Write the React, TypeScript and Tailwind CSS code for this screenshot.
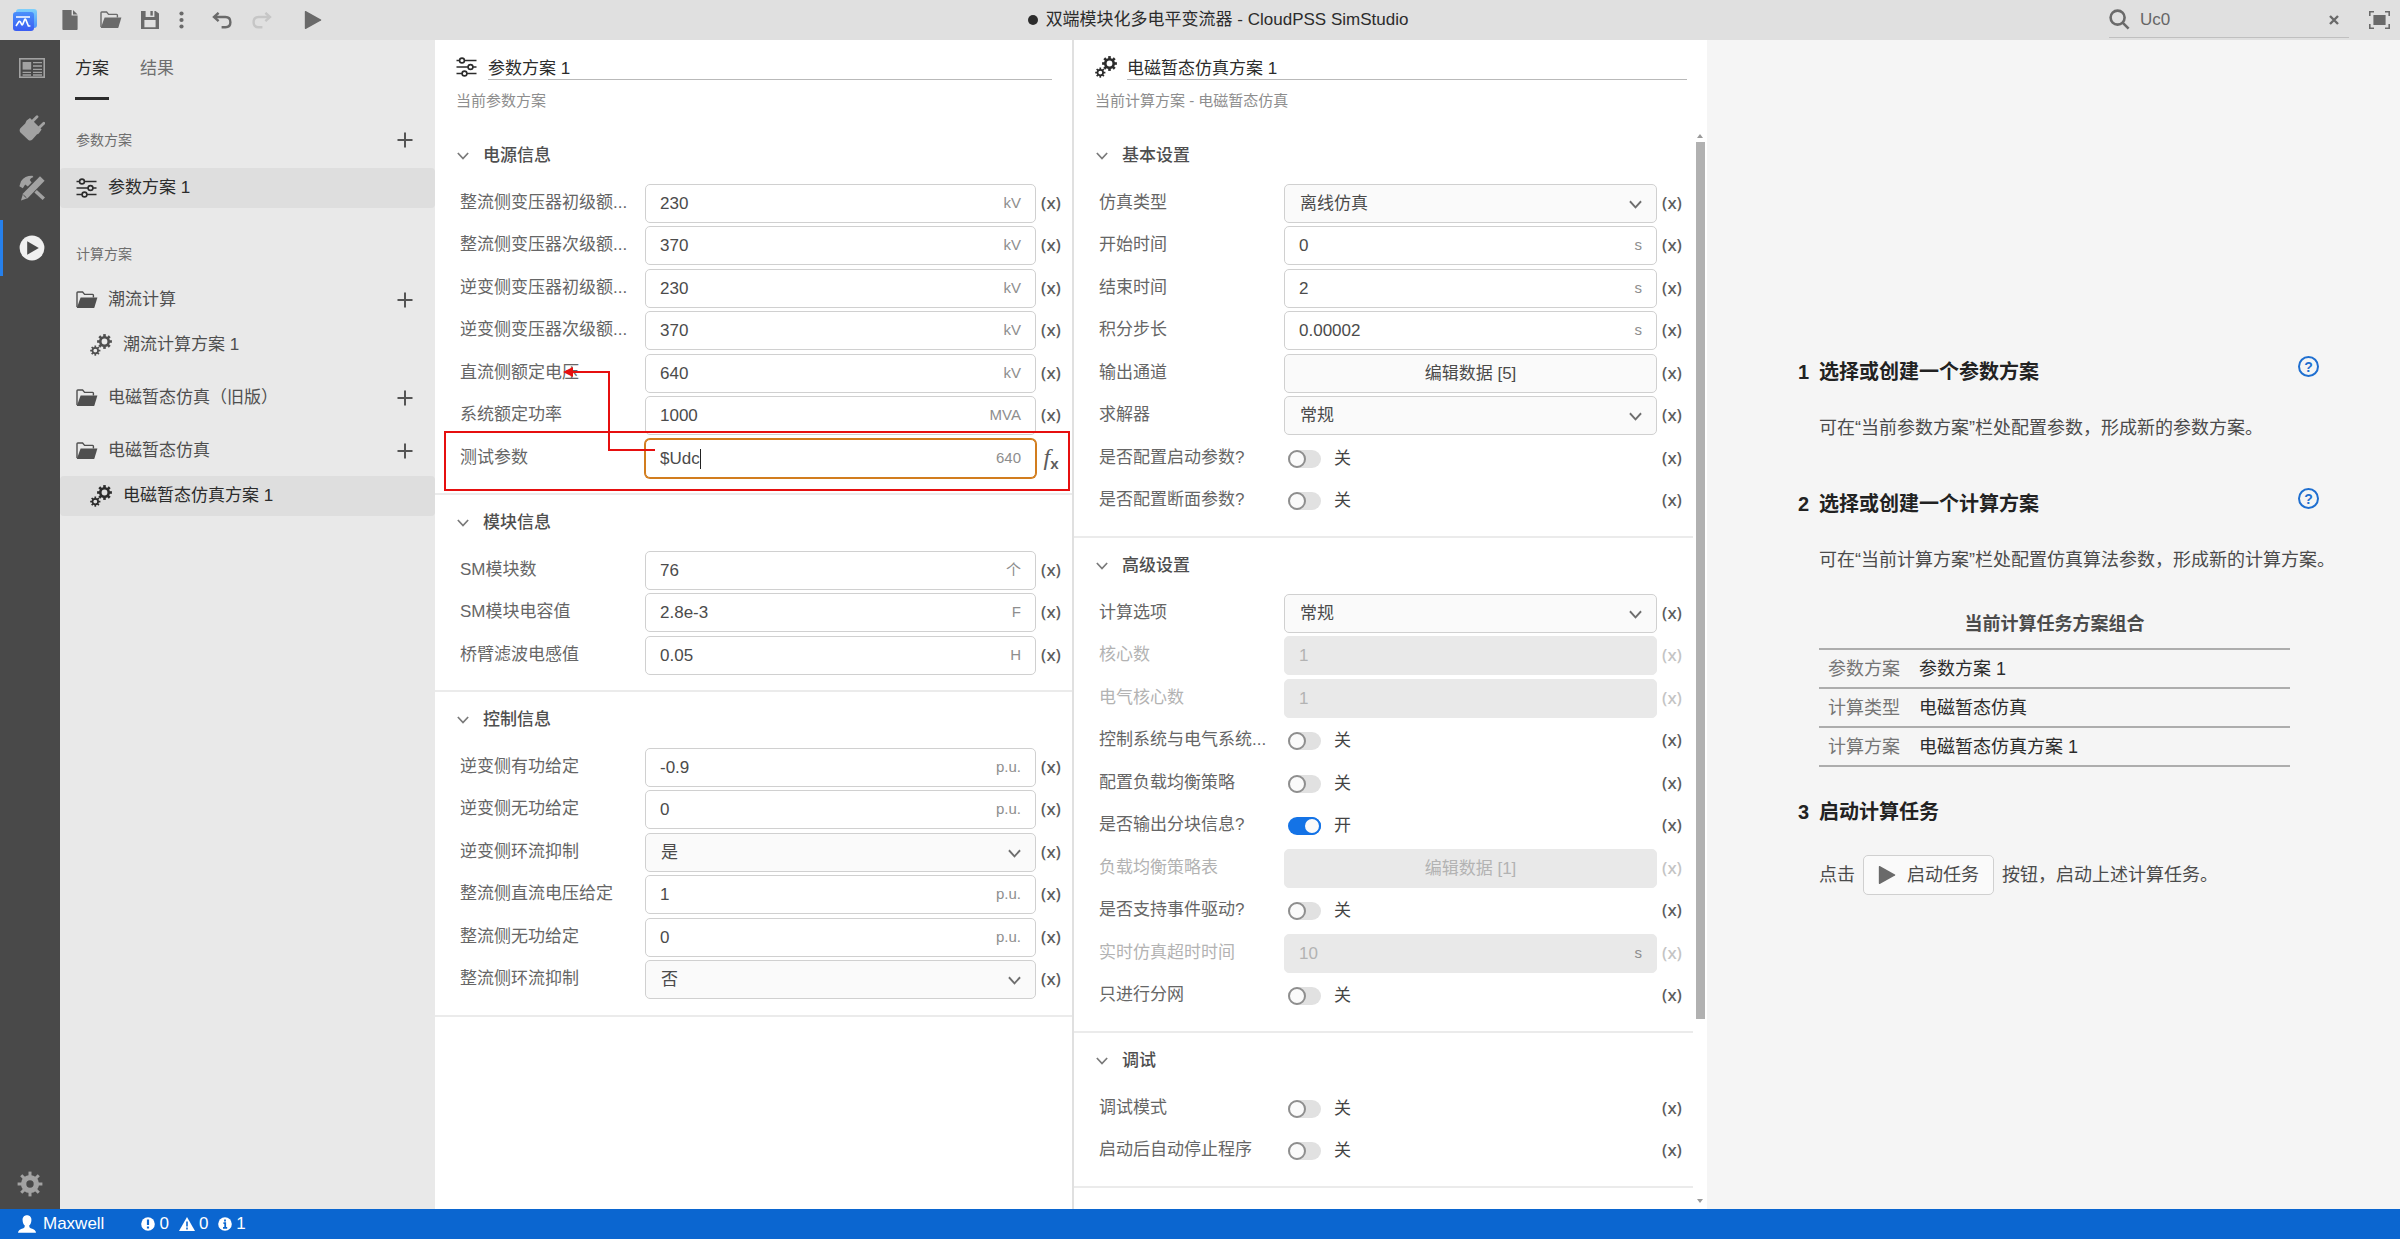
import React from 'react';

type Field = {
  label: string;
  kind?: 'text' | 'select' | 'switch' | 'button';
  value: string;
  unit?: string;
  disabled?: boolean;
  on?: boolean;
  expression?: boolean;
};

const powerFields: Field[] = [
  { label: '整流侧变压器初级额...', value: '230', unit: 'kV' },
  { label: '整流侧变压器次级额...', value: '370', unit: 'kV' },
  { label: '逆变侧变压器初级额...', value: '230', unit: 'kV' },
  { label: '逆变侧变压器次级额...', value: '370', unit: 'kV' },
  { label: '直流侧额定电压', value: '640', unit: 'kV' },
  { label: '系统额定功率', value: '1000', unit: 'MVA' },
  { label: '测试参数', value: '$Udc', unit: '640', expression: true },
];

const moduleFields: Field[] = [
  { label: 'SM模块数', value: '76', unit: '个' },
  { label: 'SM模块电容值', value: '2.8e-3', unit: 'F' },
  { label: '桥臂滤波电感值', value: '0.05', unit: 'H' },
];

const controlFields: Field[] = [
  { label: '逆变侧有功给定', value: '-0.9', unit: 'p.u.' },
  { label: '逆变侧无功给定', value: '0', unit: 'p.u.' },
  { label: '逆变侧环流抑制', kind: 'select', value: '是' },
  { label: '整流侧直流电压给定', value: '1', unit: 'p.u.' },
  { label: '整流侧无功给定', value: '0', unit: 'p.u.' },
  { label: '整流侧环流抑制', kind: 'select', value: '否' },
];

const basicFields: Field[] = [
  { label: '仿真类型', kind: 'select', value: '离线仿真' },
  { label: '开始时间', value: '0', unit: 's' },
  { label: '结束时间', value: '2', unit: 's' },
  { label: '积分步长', value: '0.00002', unit: 's' },
  { label: '输出通道', kind: 'button', value: '编辑数据 [5]' },
  { label: '求解器', kind: 'select', value: '常规' },
  { label: '是否配置启动参数?', kind: 'switch', value: '关' },
  { label: '是否配置断面参数?', kind: 'switch', value: '关' },
];

const advancedFields: Field[] = [
  { label: '计算选项', kind: 'select', value: '常规' },
  { label: '核心数', value: '1', disabled: true },
  { label: '电气核心数', value: '1', disabled: true },
  { label: '控制系统与电气系统...', kind: 'switch', value: '关' },
  { label: '配置负载均衡策略', kind: 'switch', value: '关' },
  { label: '是否输出分块信息?', kind: 'switch', value: '开', on: true },
  { label: '负载均衡策略表', kind: 'button', value: '编辑数据 [1]', disabled: true },
  { label: '是否支持事件驱动?', kind: 'switch', value: '关' },
  { label: '实时仿真超时时间', value: '10', unit: 's', disabled: true },
  { label: '只进行分网', kind: 'switch', value: '关' },
];

const debugFields: Field[] = [
  { label: '调试模式', kind: 'switch', value: '关' },
  { label: '启动后自动停止程序', kind: 'switch', value: '关' },
];

/* ---------- icons ---------- */

function Teeth({ cx, cy, r, len, w, n }: { cx: number; cy: number; r: number; len: number; w: number; n: number }) {
  return (
    <>
      {Array.from({ length: n }, (_, i) => (
        <rect
          key={i}
          x={cx - w / 2}
          y={cy - r - len}
          width={w}
          height={len + 1}
          fill="currentColor"
          transform={`rotate(${(360 / n) * i} ${cx} ${cy})`}
        />
      ))}
    </>
  );
}

function GearsIcon() {
  return (
    <svg viewBox="0 0 22 22" className="size-[22px] shrink-0" fill="none" stroke="none" aria-hidden="true">
      <circle cx="14.5" cy="7.5" r="4.2" stroke="currentColor" strokeWidth="2.6" />
      <Teeth cx={14.5} cy={7.5} r={5} len={2.4} w={2.6} n={8} />
      <circle cx="5.3" cy="16.6" r="2.8" stroke="currentColor" strokeWidth="1.7" />
      <Teeth cx={5.3} cy={16.6} r={3.3} len={1.8} w={1.7} n={8} />
    </svg>
  );
}

function SettingsIcon() {
  return (
    <svg viewBox="0 0 26 26" className="size-[26px]" fill="none" aria-hidden="true">
      <circle cx="13" cy="13" r="6.4" stroke="currentColor" strokeWidth="5.4" />
      <Teeth cx={13} cy={13} r={8.6} len={3.8} w={3} n={8} />
    </svg>
  );
}

function SlidersIcon() {
  return (
    <svg viewBox="0 0 21 20" className="h-5 w-[21px] shrink-0" fill="none" stroke="currentColor" strokeWidth="1.6" aria-hidden="true">
      <path d="M0.5 3.5H3.5M8.5 3.5H20.5M0.5 10H12M17 10H20.5M0.5 16.5H6M11 16.5H20.5" />
      <circle cx="6" cy="3.5" r="2.4" />
      <circle cx="14.5" cy="10" r="2.4" />
      <circle cx="8.5" cy="16.5" r="2.4" />
    </svg>
  );
}

function FolderIcon() {
  return (
    <svg viewBox="0 0 22 18" className="h-[18px] w-[22px] shrink-0" aria-hidden="true">
      <path d="M1 16V1.8Q1 1 1.8 1H6.6L8.6 3.4H16.6Q17.4 3.4 17.4 4.2V6.4" fill="none" stroke="currentColor" strokeWidth="1.4" />
      <path d="M4.6 6.4H21.4L18.4 16.4Q18.2 17 17.4 17H0.8Z" fill="currentColor" />
    </svg>
  );
}

function PlusIcon() {
  return (
    <svg viewBox="0 0 16 16" className="size-4" stroke="currentColor" strokeWidth="2" aria-hidden="true">
      <path d="M8 0.5V15.5M0.5 8H15.5" />
    </svg>
  );
}

function PlayIcon() {
  return (
    <svg viewBox="0 0 18 20" className="h-5 w-[18px]" aria-hidden="true">
      <path d="M0.8 1.9Q0.8 0.6 1.8 1.1L17 9.4Q17.8 10 17 10.6L1.8 18.9Q0.8 19.4 0.8 18.1Z" fill="currentColor" />
    </svg>
  );
}

function Chevron({ className }: { className: string }) {
  return (
    <svg viewBox="0 0 14 9" className={className} fill="none" stroke="currentColor" strokeWidth="2" aria-hidden="true">
      <path d="M1 1L7 7.5L13 1" />
    </svg>
  );
}

function Logo() {
  return (
    <svg viewBox="0 0 26 24" className="h-6 w-[26px]" aria-hidden="true">
      <defs>
        <linearGradient id="logo-front" x1="0" y1="0" x2="0" y2="1">
          <stop offset="0" stopColor="#4a90fb" />
          <stop offset="1" stopColor="#3a5cf2" />
        </linearGradient>
        <linearGradient id="logo-back" x1="0" y1="0" x2="0" y2="1">
          <stop offset="0" stopColor="#7fd0fb" />
          <stop offset="1" stopColor="#4d93f8" />
        </linearGradient>
      </defs>
      <rect x="4" y="1" width="21" height="19" rx="3" fill="url(#logo-back)" />
      <rect x="1" y="4" width="21" height="19" rx="3" fill="url(#logo-front)" />
      <path d="M4 9H18M4 18L6.6 14Q7.4 12.6 8.4 14L9.6 16.4Q10.2 17.4 10.8 16.2L12.6 11.6Q13.2 10.4 13.8 11.6L16.4 18H18.4" fill="none" stroke="#fff" strokeWidth="1.6" />
    </svg>
  );
}

function FileIcon() {
  return (
    <svg viewBox="0 0 16 20" className="h-5 w-4" fill="currentColor" aria-hidden="true">
      <path d="M0.4 0H9.6V5.6H15.6V19Q15.6 20 14.8 20H1.2Q0.4 20 0.4 19Z" />
      <path d="M11 0L15.6 4.4H11Z" />
    </svg>
  );
}

function SaveIcon() {
  return (
    <svg viewBox="0 0 18 18" className="size-[18px]" fill="currentColor" fillRule="evenodd" aria-hidden="true">
      <path d="M0 0H4.6V6H13.4V0H14.6L18 2.4V18H0ZM3.4 9V16.2H14.6V9Z" />
      <path d="M9.4 0H11.8V4.6H9.4Z" />
    </svg>
  );
}

function UndoIcon({ flip }: { flip?: boolean }) {
  return (
    <svg viewBox="0 0 20 17" className={flip ? 'h-[17px] w-5 -scale-x-100' : 'h-[17px] w-5'} fill="none" stroke="currentColor" strokeWidth="2.4" aria-hidden="true">
      <path d="M3 5H13.4Q18.4 5 18.4 10.2Q18.4 15.2 13.4 15.2H9.6" />
      <path d="M6.6 0.8L2 5L6.6 9.2" />
    </svg>
  );
}

function NewsIcon() {
  return (
    <svg viewBox="0 0 26 20" className="h-5 w-[26px]" fill="none" stroke="currentColor" strokeWidth="1.6" aria-hidden="true">
      <rect x="0.8" y="0.8" width="24.4" height="18.4" />
      <rect x="3.6" y="4" width="8.6" height="7.6" fill="currentColor" stroke="none" />
      <path d="M14 4.6H23M14 8H23M14 11.4H23M3.6 14.4H12M14 14.4H23M3.6 17H12M14 17H23" strokeWidth="1.4" />
    </svg>
  );
}

function PlugIcon() {
  return (
    <svg viewBox="0 0 26 26" className="size-[26px]" aria-hidden="true">
      <path d="M7.6 5.4L11 3L22.6 14.6L19.8 18.4L17.8 19.6L13.4 24.6Q11.4 26.2 9.4 25L1.2 17.2Q0 15.2 1.4 13.2L6.2 8.6Z" fill="currentColor" />
      <path d="M13 6.8L18 1.8M19.6 13.2L24.8 8.2" stroke="currentColor" strokeWidth="2.8" strokeLinecap="round" />
    </svg>
  );
}

function ToolsIcon() {
  return (
    <svg viewBox="0 0 26 26" className="size-[26px]" aria-hidden="true">
      <path d="M0.4 11.2L2 6.2Q6 0.6 13.4 0.8L14.4 2Q11.4 2.8 10.8 5L12.6 7.6L8.8 11.6L6.2 9.4L3.8 13.2Z" fill="currentColor" />
      <path d="M16.6 16.2L24.8 23.8" stroke="currentColor" strokeWidth="3.6" />
      <path d="M21 1.2L25.6 5.8L8.6 23.2L2 25.4L4 18.6Z" fill="currentColor" />
      <path d="M4.4 20L7.4 22.8" stroke="#494949" strokeWidth="1" />
    </svg>
  );
}

function RunIcon() {
  return (
    <svg viewBox="0 0 26 26" className="size-[26px]" aria-hidden="true">
      <circle cx="13" cy="13" r="12.4" fill="#f0f0f0" />
      <path d="M8.2 6.2L19.8 13L8.2 19.8Z" fill="#494949" />
    </svg>
  );
}

/* ---------- top bar ---------- */

function TopBar() {
  return (
    <header className="relative flex h-10 shrink-0 items-center bg-[#e0e0e0] text-[#6a6a6a]">
      <div className="flex items-center pl-3">
        <Logo />
        <button aria-label="新建" className="ml-6"><FileIcon /></button>
        <button aria-label="打开" className="ml-[22px]"><FolderIcon /></button>
        <button aria-label="保存" className="ml-[19px]"><SaveIcon /></button>
        <button aria-label="更多" className="ml-5">
          <svg viewBox="0 0 5 18" className="h-[18px] w-[5px]" fill="currentColor" aria-hidden="true">
            <circle cx="2.5" cy="2.5" r="2.1" />
            <circle cx="2.5" cy="9" r="2.1" />
            <circle cx="2.5" cy="15.5" r="2.1" />
          </svg>
        </button>
        <button aria-label="撤销" className="ml-7"><UndoIcon /></button>
        <button aria-label="重做" disabled className="ml-5 text-[#c6c6c6]"><UndoIcon flip /></button>
        <button aria-label="启动" className="ml-8"><PlayIcon /></button>
      </div>
      <h1 className="absolute inset-x-0 mx-auto flex w-max items-center gap-2 pl-9 text-[17px] text-[#2c2c2c]">
        <span className="size-[10px] rounded-full bg-[#2c2c2c]" />
        双端模块化多电平变流器 - CloudPSS SimStudio
      </h1>
      <div className="ml-auto flex items-center pr-[10px]">
        <label className="flex h-9 w-60 items-center border-b border-[#c0c0c0]">
          <svg viewBox="0 0 21 21" className="size-[21px]" fill="none" stroke="currentColor" strokeWidth="2.6" aria-hidden="true">
            <circle cx="8.6" cy="8.6" r="7" />
            <path d="M13.6 13.6L19.6 19.6" />
          </svg>
          <input aria-label="搜索" defaultValue="Uc0" className="ml-[10px] min-w-0 flex-1 bg-transparent text-[17px] text-[#666] outline-none" />
          <button aria-label="清除" className="pr-[10px]">
            <svg viewBox="0 0 10 10" className="size-[10px]" stroke="currentColor" strokeWidth="2.4" aria-hidden="true">
              <path d="M1 1L9 9M9 1L1 9" />
            </svg>
          </button>
        </label>
        <button aria-label="全屏" className="ml-5">
          <svg viewBox="0 0 21 18" className="h-[18px] w-[21px]" fill="none" stroke="currentColor" strokeWidth="1.6" aria-hidden="true">
            <path d="M0.8 5V0.8H5M16 0.8H20.2V5M20.2 13V17.2H16M5 17.2H0.8V13" />
            <rect x="4.4" y="4" width="12.2" height="10" fill="currentColor" stroke="none" />
          </svg>
        </button>
      </div>
    </header>
  );
}

/* ---------- activity bar and side bar ---------- */

function ActivityBar() {
  const item = 'flex h-14 w-full items-center justify-center border-l-[3px] border-transparent';
  return (
    <nav className="flex w-[60px] shrink-0 flex-col gap-1 bg-[#494949] text-[#a2a2a2]">
      <button aria-label="概览" className={item}><NewsIcon /></button>
      <button aria-label="接口" className={item}><PlugIcon /></button>
      <button aria-label="实现" className={item}><ToolsIcon /></button>
      <button aria-label="运行" className="flex h-14 w-full items-center justify-center border-l-[3px] border-[#2680eb]"><RunIcon /></button>
      <button aria-label="设置" className="mt-auto flex h-[50px] w-full items-center justify-center"><SettingsIcon /></button>
    </nav>
  );
}

function GroupRow({ name }: { name: string }) {
  return (
    <div className="flex h-10 items-center pr-[22px] pl-4 text-[#4f4f4f]">
      <FolderIcon />
      <span className="ml-[10px] flex-1">{name}</span>
      <button aria-label={`新建${name}方案`} className="text-[#555]"><PlusIcon /></button>
    </div>
  );
}

function SideBar() {
  return (
    <aside className="flex w-[375px] shrink-0 flex-col bg-[#e9e9e9] text-[17px]">
      <div role="tablist" className="flex gap-[31px] pl-[15px]">
        <button role="tab" aria-selected="true" className="h-[60px] border-b-[3px] border-[#2c2c2c] text-[#2c2c2c]">方案</button>
        <button role="tab" aria-selected="false" className="h-[60px] border-b-[3px] border-transparent text-[#6e6e6e]">结果</button>
      </div>
      <div className="mt-5 flex h-10 items-center justify-between pr-[22px] pl-4">
        <h2 className="text-sm text-[#6e6e6e]">参数方案</h2>
        <button aria-label="新建参数方案" className="text-[#555]"><PlusIcon /></button>
      </div>
      <button className="mt-2 flex h-10 items-center gap-[11px] rounded-sm bg-[#dedede] pl-4 text-[#2c2c2c]">
        <SlidersIcon />
        参数方案 1
      </button>
      <h2 className="mt-[34px] flex h-6 items-center pl-4 text-sm text-[#6e6e6e]">计算方案</h2>
      <div className="mt-[14px]">
        <GroupRow name="潮流计算" />
      </div>
      <button className="mt-[5px] flex h-10 items-center gap-[11px] pl-[30px] text-[#4f4f4f]">
        <GearsIcon />
        潮流计算方案 1
      </button>
      <div className="mt-[13px]">
        <GroupRow name="电磁暂态仿真（旧版）" />
      </div>
      <div className="mt-[13px]">
        <GroupRow name="电磁暂态仿真" />
      </div>
      <button className="mt-[5px] flex h-10 items-center gap-[11px] rounded-sm bg-[#dedede] pl-[30px] text-[#2c2c2c]">
        <GearsIcon />
        电磁暂态仿真方案 1
      </button>
    </aside>
  );
}

/* ---------- property forms ---------- */

function Control({ field, id }: { field: Field; id: string }) {
  const { kind = 'text', value, unit, disabled, on, expression } = field;
  if (kind === 'switch') {
    return (
      <div className="flex flex-1 items-center gap-[13px] pl-1 text-[#444]">
        <span className="relative flex">
          <input
            id={id}
            type="checkbox"
            role="switch"
            defaultChecked={on}
            className="peer h-[18px] w-[33px] appearance-none rounded-full bg-[#e1e1e1] checked:bg-[#1473e6]"
          />
          <span className="pointer-events-none absolute top-0 left-0 size-[18px] rounded-full border-2 border-[#8e8e8e] bg-[#fafafa] peer-checked:right-0 peer-checked:left-auto peer-checked:border-[#1473e6]" />
        </span>
        <span>{value}</span>
      </div>
    );
  }
  if (kind === 'button') {
    return (
      <button
        id={id}
        disabled={disabled}
        className="h-[39px] min-w-0 flex-1 rounded-[5px] border border-[#d0d0d0] bg-[#fafafa] text-[#4b4b4b] disabled:border-[#e9e9e9] disabled:bg-[#e9e9e9] disabled:text-[#b3b3b3]"
      >
        {value}
      </button>
    );
  }
  if (kind === 'select') {
    return (
      <div className="relative min-w-0 flex-1">
        <select id={id} className="h-[39px] w-full appearance-none rounded-[5px] border border-[#d0d0d0] bg-[#fafafa] px-[15px] text-[#4b4b4b]">
          <option>{value}</option>
        </select>
        <Chevron className="pointer-events-none absolute top-4 right-[15px] h-[9px] w-[13px] text-[#6e6e6e]" />
      </div>
    );
  }
  return (
    <div
      className={
        expression
          ? 'relative flex h-[39px] min-w-0 flex-1 items-center rounded-[5px] border border-[#d27d1e] bg-white px-[14px] ring-1 ring-[#d27d1e]'
          : disabled
            ? 'flex h-[39px] min-w-0 flex-1 items-center rounded-[5px] border border-[#e9e9e9] bg-[#e9e9e9] px-[14px]'
            : 'flex h-[39px] min-w-0 flex-1 items-center rounded-[5px] border border-[#d0d0d0] bg-white px-[14px]'
      }
    >
      <input
        id={id}
        defaultValue={value}
        disabled={disabled}
        className="min-w-0 flex-1 bg-transparent text-[#4b4b4b] outline-none disabled:text-[#b3b3b3]"
      />
      {expression && <span className="absolute left-[54px] h-5 w-px bg-[#222]" />}
      {unit && <span className="text-[15px] text-[#8e8e8e]">{unit}</span>}
    </div>
  );
}

function ReferenceMark() {
  return (
    <>
      <span className="pointer-events-none absolute -top-2 right-[2px] left-[9px] z-10 h-[60px] border-2 border-[#e60f0f]" />
      <svg viewBox="0 0 94 90" className="pointer-events-none absolute -top-[73px] left-[128px] z-10 h-[90px] w-[94px]" aria-hidden="true">
        <path d="M92 84H46V6H9" fill="none" stroke="#e60f0f" strokeWidth="2" />
        <path d="M0 6L10 1V11Z" fill="#e60f0f" />
      </svg>
    </>
  );
}

function FieldRow({ field, id }: { field: Field; id: string }) {
  return (
    <div className="relative flex h-[42px] items-start pr-[10px] pl-[25px] even:h-[43px]">
      <label
        htmlFor={id}
        className={
          field.disabled
            ? 'w-[185px] shrink-0 leading-[38px] whitespace-nowrap text-[#b3b3b3]'
            : 'w-[185px] shrink-0 leading-[38px] whitespace-nowrap text-[#666]'
        }
      >
        {field.label}
      </label>
      <div className="flex h-[39px] min-w-0 flex-1 items-center">
        <Control field={field} id={id} />
        <button
          aria-label={`${field.label}表达式`}
          disabled={field.disabled}
          className="ml-1 w-[22px] shrink-0 pb-px text-center font-['Noto_Sans'] font-medium text-[#5c5c5c] disabled:text-[#c4c4c4]"
        >
          {field.expression ? (
            <span className="font-['Liberation_Serif'] text-[24px] leading-6 font-normal italic">
              f<sub className="font-['Noto_Sans'] text-[15px] font-semibold not-italic">x</sub>
            </span>
          ) : (
            '(x)'
          )}
        </button>
      </div>
      {field.expression && <ReferenceMark />}
    </div>
  );
}

function FieldSection({ title, fields, prefix }: { title: string; fields: Field[]; prefix: string }) {
  return (
    <section className="border-b-2 border-[#ebebeb] pb-3">
      <h3>
        <button className="flex h-14 items-center gap-[14px] pl-[22px] font-medium text-[#4f4f4f]" aria-expanded="true">
          <Chevron className="h-2 w-3 text-[#7a7a7a]" />
          {title}
        </button>
      </h3>
      <div>
        {fields.map((f, i) => (
          <FieldRow key={f.label} field={f} id={`${prefix}-${i}`} />
        ))}
      </div>
    </section>
  );
}

function PanelHeader({ icon, name, caption }: { icon: React.ReactNode; name: string; caption: string }) {
  return (
    <div className="h-[88px] shrink-0 pt-[13px] pr-5 pl-[21px] text-[#2c2c2c]">
      <div className="flex items-center">
        <span className="flex w-8 shrink-0">{icon}</span>
        <input aria-label={caption} defaultValue={name} className="h-[27px] min-w-0 flex-1 border-b border-[#b9b9b9] bg-transparent outline-none" />
      </div>
      <p className="mt-[10px] text-[15px] leading-[22px] text-[#8e8e8e]">{caption}</p>
    </div>
  );
}

function ParameterPanel() {
  return (
    <section className="flex min-w-0 flex-col overflow-hidden border-r-2 border-[#e0e0e0] bg-white">
      <PanelHeader icon={<SlidersIcon />} name="参数方案 1" caption="当前参数方案" />
      <FieldSection title="电源信息" fields={powerFields} prefix="power" />
      <FieldSection title="模块信息" fields={moduleFields} prefix="module" />
      <FieldSection title="控制信息" fields={controlFields} prefix="control" />
    </section>
  );
}

function JobPanel() {
  return (
    <section className="flex min-w-0 flex-col overflow-hidden bg-white">
      <PanelHeader icon={<GearsIcon />} name="电磁暂态仿真方案 1" caption="当前计算方案 - 电磁暂态仿真" />
      <div className="flex min-h-0 flex-1">
        <div className="min-w-0 flex-1 overflow-hidden">
          <FieldSection title="基本设置" fields={basicFields} prefix="basic" />
          <FieldSection title="高级设置" fields={advancedFields} prefix="advanced" />
          <FieldSection title="调试" fields={debugFields} prefix="debug" />
        </div>
        <div className="flex w-[14px] flex-col items-center py-[6px] text-[#9a9a9a]" aria-hidden="true">
          <svg viewBox="0 0 6 4" className="h-1 w-[6px]" fill="currentColor"><path d="M3 0L6 4H0Z" /></svg>
          <div className="mt-1 h-[82%] w-[9px] bg-[#b1b1b1]" />
          <svg viewBox="0 0 6 4" className="mt-auto h-1 w-[6px]" fill="currentColor"><path d="M0 0H6L3 4Z" /></svg>
        </div>
      </div>
    </section>
  );
}

/* ---------- guide ---------- */

function StepTitle({ n, title, help }: { n: number; title: string; help?: boolean }) {
  return (
    <div className="flex items-start">
      <h2 className="flex flex-1 text-xl leading-8 font-bold text-[#222]">
        <span className="w-[21px]">{n}</span>
        {title}
      </h2>
      {help && (
        <button aria-label={`${title}帮助`} className="flex size-[21px] items-center justify-center rounded-full border-2 border-[#1f6fd0] text-sm font-bold text-[#1f6fd0]">
          ?
        </button>
      )}
    </div>
  );
}

function Guide() {
  const rows = [
    ['参数方案', '参数方案 1'],
    ['计算类型', '电磁暂态仿真'],
    ['计算方案', '电磁暂态仿真方案 1'],
  ];
  return (
    <section className="flex min-w-0 flex-col justify-center bg-[#f5f5f5] pt-[2px] pr-[81px] pl-[91px] text-lg leading-7 text-[#4b4b4b]">
      <StepTitle n={1} title="选择或创建一个参数方案" help />
      <p className="mt-[26px] pl-[21px] whitespace-nowrap">可在“当前参数方案”栏处配置参数，形成新的参数方案。</p>
      <div className="mt-[46px]">
        <StepTitle n={2} title="选择或创建一个计算方案" help />
      </div>
      <p className="mt-[26px] pl-[21px] whitespace-nowrap">可在“当前计算方案”栏处配置仿真算法参数，形成新的计算方案。</p>
      <div className="mt-9 pr-[29px] pl-[21px]">
        <table className="w-full border-collapse">
          <caption className="pb-[10px] font-bold">当前计算任务方案组合</caption>
          <tbody>
            {rows.map(([k, v]) => (
              <tr key={k} className="h-[39px] border-y-2 border-[#adadad]">
                <th scope="row" className="w-[100px] pl-[9px] text-left font-normal text-[#757575]">{k}</th>
                <td className="text-[#2c2c2c]">{v}</td>
              </tr>
            ))}
          </tbody>
        </table>
      </div>
      <div className="mt-[29px]">
        <StepTitle n={3} title="启动计算任务" />
      </div>
      <div className="mt-[27px] flex items-center pl-[21px]">
        <span>点击</span>
        <button className="mx-2 flex h-10 items-center gap-[11px] rounded-[5px] border border-[#d0d0d0] bg-[#fafafa] px-[14px]">
          <span className="text-[#6a6a6a]"><PlayIcon /></span>
          启动任务
        </button>
        <span>按钮，启动上述计算任务。</span>
      </div>
    </section>
  );
}

/* ---------- status bar ---------- */

function StatusBar() {
  return (
    <footer className="flex h-[30px] shrink-0 items-center bg-[#0b66d0] pl-[18px] text-[17px] text-white">
      <svg viewBox="0 0 18 18" className="size-[18px]" fill="currentColor" aria-hidden="true">
        <path d="M9 0.2C12 0.2 13.6 2.4 13.4 5.2C13.3 7.6 12.4 9.4 11.2 10.6Q11 12.6 12.6 13.2Q17.8 14.4 18 17.8H0Q0.2 14.4 5.4 13.2Q7 12.6 6.8 10.6C5.6 9.4 4.7 7.6 4.6 5.2C4.4 2.4 6 0.2 9 0.2Z" />
      </svg>
      <span className="ml-[7px]">Maxwell</span>
      <svg viewBox="0 0 14 14" className="ml-[37px] size-[14px]" aria-hidden="true">
        <circle cx="7" cy="7" r="6.8" fill="currentColor" />
        <path d="M7 2.6V8M7 9.4V11.6" stroke="#0b66d0" strokeWidth="2.2" />
      </svg>
      <span className="ml-1">0</span>
      <svg viewBox="0 0 16 14" className="ml-[10px] h-[14px] w-4" aria-hidden="true">
        <path d="M8 0L16 14H0Z" fill="currentColor" />
        <path d="M8 4.6V9.4M8 10.6V12.4" stroke="#0b66d0" strokeWidth="1.6" />
      </svg>
      <span className="ml-1">0</span>
      <svg viewBox="0 0 14 14" className="ml-[10px] size-[14px]" aria-hidden="true">
        <circle cx="7" cy="7" r="6.8" fill="currentColor" />
        <path d="M7 2.4V4.6M5.4 6.2H7.2V10.6M5 10.8H9.2" fill="none" stroke="#0b66d0" strokeWidth="1.8" />
      </svg>
      <span className="ml-1">1</span>
    </footer>
  );
}

export default function App() {
  return (
    <div className="flex h-screen flex-col overflow-hidden bg-white font-['Liberation_Sans','Noto_Sans_CJK_SC',sans-serif] text-[17px]">
      <TopBar />
      <div className="flex min-h-0 flex-1">
        <ActivityBar />
        <SideBar />
        <main className="grid min-w-0 flex-1 grid-cols-[639fr_633fr_693fr] grid-rows-[minmax(0,1fr)]">
          <ParameterPanel />
          <JobPanel />
          <Guide />
        </main>
      </div>
      <StatusBar />
    </div>
  );
}
